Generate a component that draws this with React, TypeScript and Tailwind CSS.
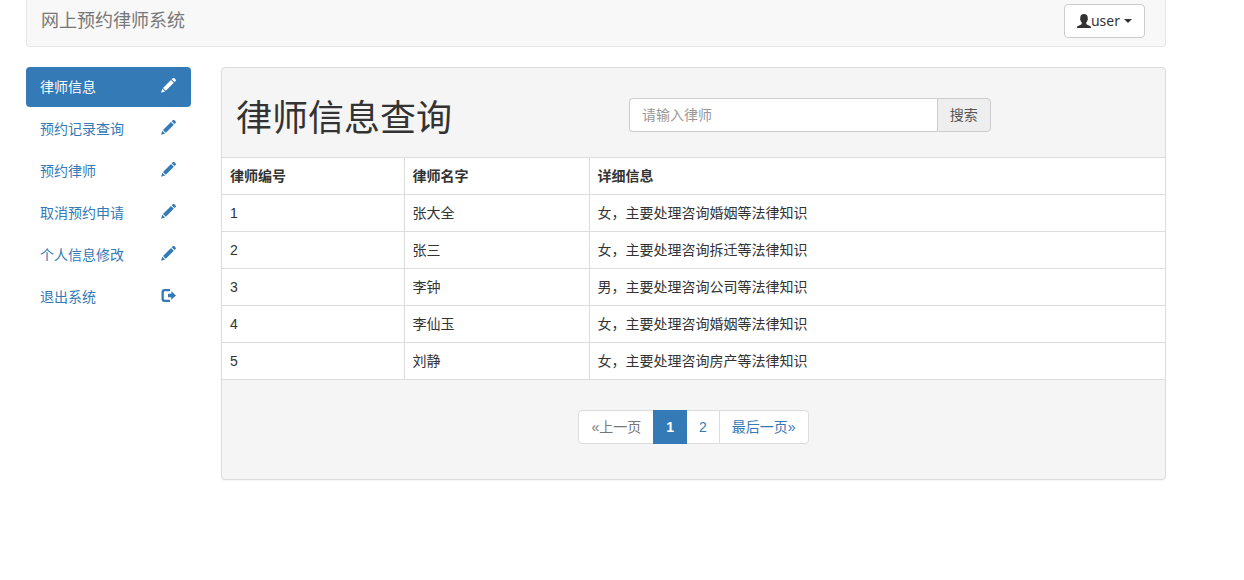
import { useState } from "react";

interface Lawyer {
  id: number;
  name: string;
  detail: string;
}

const menuItems = ["律师信息", "预约记录查询", "预约律师", "取消预约申请", "个人信息修改", "退出系统"];

const lawyers: Lawyer[] = [
  { id: 1, name: "张大全", detail: "女，主要处理咨询婚姻等法律知识" },
  { id: 2, name: "张三", detail: "女，主要处理咨询拆迁等法律知识" },
  { id: 3, name: "李钟", detail: "男，主要处理咨询公司等法律知识" },
  { id: 4, name: "李仙玉", detail: "女，主要处理咨询婚姻等法律知识" },
  { id: 5, name: "刘静", detail: "女，主要处理咨询房产等法律知识" },
];

function PencilIcon() {
  return (
    <svg viewBox="0 0 16 16" className="h-4 w-4 shrink-0" fill="currentColor" aria-hidden="true">
      <path d="M12.8 1.2a1.1 1.1 0 0 1 1.5 0l1.3 1.3a1.1 1.1 0 0 1 0 1.5l-1.1 1.1-2.8-2.8z" />
      <path d="M11 3l2.8 2.800-8 8-2.800-2.800z" />
      <path d="M2.400 11.700l2.700 2.700L1 15.8z" />
    </svg>
  );
}

function LogoutIcon() {
  return (
    <svg viewBox="0 0 16 16" className="h-4 w-4 shrink-0" fill="currentColor" aria-hidden="true">
      <path d="M10 2H4.500A3 3 0 0 0 1.500 5v7a3 3 0 0 0 3 3H10v-2.300H5a1.200 1.200 0 0 1-1.200-1.200v-6A1.200 1.200 0 0 1 5 4.300h5z" />
      <path d="M11.300 4.200l4.700 4.300-4.700 4.300V10.300H8V6.700h3.300z" />
    </svg>
  );
}

function UserIcon() {
  return (
    <svg viewBox="0 0 14 14" className="h-3.5 w-3.5 shrink-0" fill="currentColor" aria-hidden="true">
      <path d="M7 0C4.500 0 3.300 1.400 3.300 3.500v1.100c-.4.200-.3 1.400.2 1.700.2 1 .6 1.700 1.200 2.300v1.100c0 .5-.4.8-1 1L1 11.900c-.7.300-1 .7-1 1.400v.7h14v-.7c0-.7-.3-1.100-1-1.400l-2.700-1.200c-.6-.2-1-.5-1-1V8.600c.6-.6 1-1.300 1.200-2.300.5-.3.600-1.500.2-1.700V3.500C10.700 1.400 9.500 0 7 0z" />
    </svg>
  );
}

function CaretIcon() {
  return (
    <svg viewBox="0 0 8 4" className="h-1 w-2 shrink-0" fill="currentColor" aria-hidden="true">
      <path d="M0 0h8L4 4z" />
    </svg>
  );
}

function Navbar() {
  return (
    <header className="flex items-start justify-between rounded-b border border-t-0 border-[#e7e7e7] bg-[#f8f8f8] pt-1 pr-5 pb-2 pl-3.5">
      <a href="#" className="py-1.5 text-lg leading-[22px] text-[#777]">
        网上预约律师系统
      </a>
      <button
        type="button"
        className="flex items-center rounded border border-[#ccc] bg-white px-3 py-1.5 font-['Noto_Sans',sans-serif] leading-5"
      >
        <UserIcon />
        <span className="mr-1">user</span>
        <CaretIcon />
      </button>
    </header>
  );
}

function Sidebar() {
  const [active, setActive] = useState(0);

  return (
    <nav className="w-[165px] shrink-0">
      <ul className="flex flex-col gap-0.5">
        {menuItems.map((label, i) => (
          <li key={label}>
            <a
              href="#"
              onClick={() => setActive(i)}
              className={`flex items-start justify-between rounded py-2.5 pr-[15px] pl-3.5 ${
                i === active ? "bg-[#337ab7] text-white" : "text-[#337ab7]"
              }`}
            >
              {label}
              {i === menuItems.length - 1 ? <LogoutIcon /> : <PencilIcon />}
            </a>
          </li>
        ))}
      </ul>
    </nav>
  );
}

function SearchForm() {
  const [keyword, setKeyword] = useState("");

  return (
    <form className="flex w-5/12 pr-[17px] pl-3.5" onSubmit={(e) => e.preventDefault()}>
      <input
        type="text"
        value={keyword}
        onChange={(e) => setKeyword(e.target.value)}
        placeholder="请输入律师"
        aria-label="请输入律师"
        className="h-[34px] min-w-0 flex-1 rounded-l border border-r-0 border-[#ccc] bg-white px-3 leading-5 placeholder:text-[#999]"
      />
      <button type="submit" className="h-[34px] rounded-r border border-[#ccc] bg-[#eee] px-3 leading-5 text-[#555]">
        搜索
      </button>
    </form>
  );
}

function LawyerTable() {
  return (
    <table className="w-full table-fixed border-collapse bg-white text-left">
      <colgroup>
        <col className="w-[182px]" />
        <col className="w-[185px]" />
        <col />
      </colgroup>
      <thead>
        <tr className="border-y border-[#ddd]">
          <th className="border-r border-[#ddd] px-2 py-2 font-bold">律师编号</th>
          <th className="border-r border-[#ddd] px-2 py-2 font-bold">律师名字</th>
          <th className="px-2 py-2 font-bold">详细信息</th>
        </tr>
      </thead>
      <tbody>
        {lawyers.map((lawyer) => (
          <tr key={lawyer.id} className="border-b border-[#ddd]">
            <td className="border-r border-[#ddd] px-2 py-2">{lawyer.id}</td>
            <td className="border-r border-[#ddd] px-2 py-2">{lawyer.name}</td>
            <td className="px-2 py-2">{lawyer.detail}</td>
          </tr>
        ))}
      </tbody>
    </table>
  );
}

function Pagination() {
  return (
    <nav className="flex justify-center pt-[30px] pb-[35px]" aria-label="pagination">
      <ul className="flex text-[#337ab7]">
        <li>
          <a href="#" className="block rounded-l border border-[#ddd] bg-white px-3 py-1.5 text-[#777]">
            «上一页
          </a>
        </li>
        <li className="relative z-10 -ml-px">
          <a href="#" aria-current="page" className="block border border-[#337ab7] bg-[#337ab7] px-3 py-1.5 font-bold text-white">
            1
          </a>
        </li>
        <li className="-ml-px">
          <a href="#" className="block border border-[#ddd] bg-white px-3 py-1.5">
            2
          </a>
        </li>
        <li className="-ml-px">
          <a href="#" className="block rounded-r border border-[#ddd] bg-white px-3 py-1.5">
            最后一页»
          </a>
        </li>
      </ul>
    </nav>
  );
}

export default function App() {
  return (
    <div className="min-h-screen bg-white pr-[78px] pl-[26px] font-['Liberation_Sans','Noto_Sans_CJK_SC',sans-serif] text-sm leading-5 text-[#333]">
      <Navbar />
      <div className="mt-5 flex items-start gap-[30px]">
        <Sidebar />
        <main className="min-w-0 flex-1 overflow-hidden rounded border border-[#ddd] bg-[#f5f5f5] shadow-xs">
          <div className="flex items-start pt-[30px] pb-[17px]">
            <h1 className="w-5/12 pl-3.5 text-4xl leading-[42px] font-normal">律师信息查询</h1>
            <SearchForm />
          </div>
          <LawyerTable />
          <Pagination />
        </main>
      </div>
    </div>
  );
}
